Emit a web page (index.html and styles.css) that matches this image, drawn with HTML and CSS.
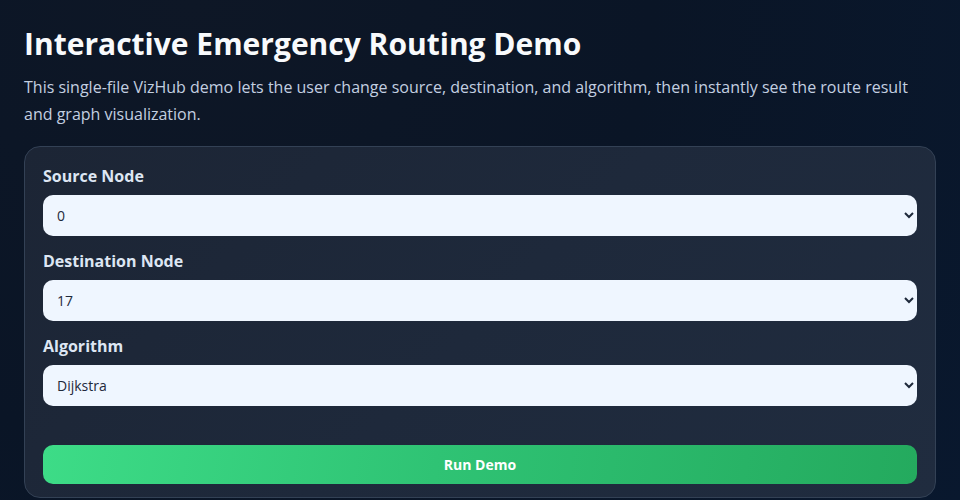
FILE: index.html
```html
<!DOCTYPE html>
<html lang="en">
<head>
<meta charset="utf-8">
<title>Interactive Emergency Routing Demo</title>
<link rel="stylesheet" href="styles.css">
</head>
<body>
<main class="page">
  <h1 class="title">Interactive Emergency Routing Demo</h1>
  <p class="intro">This single-file VizHub demo lets the user change source, destination, and algorithm, then instantly see the route result and graph visualization.</p>
  <section class="card">
    <div class="field">
      <label class="label" for="src">Source Node</label>
      <select class="select" id="src"><option>0</option></select>
    </div>
    <div class="field">
      <label class="label" for="dst">Destination Node</label>
      <select class="select" id="dst"><option>17</option></select>
    </div>
    <div class="field">
      <label class="label" for="alg">Algorithm</label>
      <select class="select" id="alg"><option>Dijkstra</option></select>
    </div>
    <button class="run" type="button">Run Demo</button>
  </section>
</main>
</body>
</html>
```
FILE: styles.css
```css
* { box-sizing: border-box; }
html, body { margin: 0; height: 100%; }
body {
  background: radial-gradient(circle at 20% 0%, #0e1726 0%, #0a1526 50%, #09182e 100%);
  color: #f8fafc;
  font-family: "Open Sans", "Noto Sans", sans-serif;
  overflow: hidden;
}
.page {
  padding: 24px;
  display: flex;
  flex-direction: column;
}
.title {
  margin: 2px 0 0;
  font-size: 30px;
  line-height: 36px;
  font-weight: 700;
  color: #f8fafc;
}
.intro {
  margin: 12px 0 18px;
  font-size: 16px;
  line-height: 27px;
  color: #c3cfe0;
}
.card {
  border: 1px solid #334155;
  border-radius: 16px;
  background: linear-gradient(135deg, #1c2535 0%, #1e293b 50%, #202c3f 100%);
  padding: 17px 18px 13px;
  display: flex;
  flex-direction: column;
}
.field {
  display: flex;
  flex-direction: column;
  gap: 7px;
  margin-bottom: 13px;
}
.label {
  font-size: 16px;
  line-height: 24px;
  font-weight: 700;
  color: #dde6f3;
}
.select {
  height: 41px;
  border: none;
  border-radius: 10px;
  background-color: #eff6ff;
  color: #1e293b;
  font-family: "Open Sans", "Noto Sans", sans-serif;
  font-size: 14px;
  padding: 0 10px;
}
.run {
  margin-top: 26px;
  height: 39px;
  border: none;
  border-radius: 10px;
  background: linear-gradient(100deg, #3ddc87 0%, #2fc374 45%, #24aa5e 100%);
  color: #ffffff;
  font-family: "Open Sans", "Noto Sans", sans-serif;
  font-size: 14px;
  font-weight: 700;
}
```
